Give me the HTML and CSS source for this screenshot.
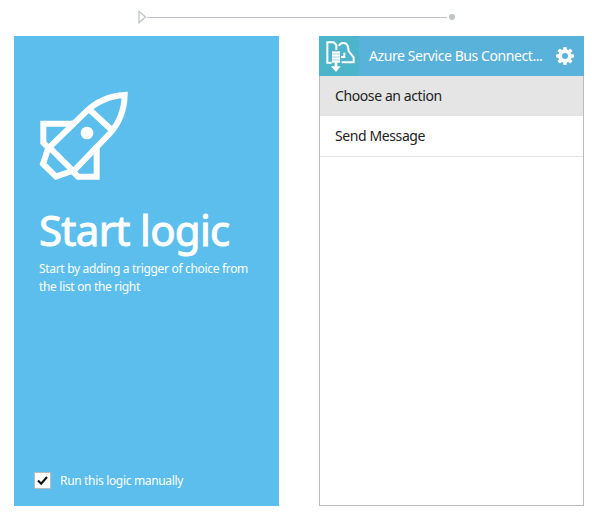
FILE: index.html
```html
<!DOCTYPE html>
<html lang="en">
<head>
<meta charset="utf-8">
<title>Start logic</title>
<link rel="stylesheet" href="styles.css">
</head>
<body>
<div class="flow">
  <svg class="flow-start" viewBox="0 0 9 14"><path d="M1 1.3V12.7L7.5 7Z" fill="none" stroke="#bfc2c9" stroke-width="1.3"/></svg>
  <span class="flow-line"></span>
  <span class="flow-end"></span>
</div>
<main class="cards">
  <section class="card start">
    <svg class="rocket" viewBox="0 0 324 312" fill="none" stroke="#fff" stroke-width="18">
      <path d="M58 190L166 85C200 52 242 35 284 33C283 77 270 114 240 148L130 262Z"/>
      <path d="M180 78L245 138M134 119H40V176L62 198M56 188L39 240L78 278L126 261M200 184V278H144L118 252"/>
      <circle cx="171" cy="147" r="19" fill="#fff" stroke="none"/>
    </svg>
    <h1 class="title">Start logic</h1>
    <p class="intro">Start by adding a trigger of choice from<br>the list on the right</p>
    <label class="manual">
      <span class="check"><svg viewBox="0 0 15 15"><path d="M3 7.5L6.2 10.8L12 4" fill="none" stroke="#111" stroke-width="2.1"/></svg></span>
      <span>Run this logic manually</span>
    </label>
  </section>
  <section class="card connector">
    <header class="head">
      <svg class="bus" viewBox="0 0 120 120" fill="none" stroke="#fff" stroke-width="6">
        <path d="M38 80H25V19H44L52 27V42M60 30C63 19 82 16 87 32L89 45L104 64V79H68M66 63H76V50"/>
        <path d="M39 46H63V80H39Z" fill="#fff" stroke="none"/>
        <path d="M39 54H63M39 63H63M39 72H63" stroke="#70c5d5" stroke-width="2"/>
        <path d="M47 78H55V91H65L51 108L36 91H47Z" fill="#fff" stroke="none"/>
      </svg>
      <span class="name">Azure Service Bus Connect...</span>
      <svg class="gear" viewBox="0 0 18 18"><g fill="#fff"><circle cx="9" cy="9" r="6.7"/><g id="teeth"><rect x="7.2" y="0" width="3.6" height="18" rx=".8"/><rect x="0" y="7.2" width="18" height="3.6" rx=".8"/></g><use href="#teeth" transform="rotate(45 9 9)"/></g><circle cx="9" cy="9" r="3" fill="#59b2d9"/></svg>
    </header>
    <div class="row selected">Choose an action</div>
    <div class="row">Send Message</div>
  </section>
</main>
</body>
</html>
```
FILE: styles.css
```css
* { box-sizing: border-box; }
body {
  margin: 0;
  width: 592px;
  height: 516px;
  overflow: hidden;
  background: #fff;
  font-family: "Noto Sans", "Open Sans", sans-serif;
}
svg { display: block; flex: none; }
.flow {
  display: flex;
  align-items: center;
  height: 36px;
  padding: 0 0 2px 138px;
}
.flow-start { width: 9px; height: 14px; }
.flow-line { width: 300px; height: 1px; background: #bfc2c6; }
.flow-end { width: 6px; height: 6px; margin-left: 2px; border-radius: 50%; background: #bfc4c9; }
.cards { display: flex; gap: 40px; padding-left: 14px; }
.card { width: 265px; height: 470px; }
.start {
  display: flex;
  flex-direction: column;
  padding: 48px 16px 16px;
  background: #5cbeec;
  color: #fff;
}
.rocket { width: 108px; height: 104px; }
.title {
  margin: 12px 0 0 9px;
  font-size: 42px;
  line-height: 60px;
  font-weight: 400;
  letter-spacing: -.7px;
  white-space: nowrap;
  -webkit-text-stroke: 1px #fff;
}
.intro {
  margin: 0 0 0 9px;
  font-size: 12px;
  line-height: 18px;
  letter-spacing: -.32px;
  white-space: nowrap;
}
.manual {
  display: flex;
  align-items: center;
  gap: 9px;
  height: 20px;
  margin: auto 0 0 4px;
  font-size: 12px;
  letter-spacing: -.33px;
}
.check { width: 17px; height: 17px; border: 1px solid #bbb; background: #fff; }
.connector { border: 1px solid #bbb; border-top: 0; }
.head {
  display: flex;
  align-items: center;
  height: 40px;
  margin: 0 -1px;
  background: #59b2d9;
  color: #fff;
  font-size: 14px;
}
.bus { width: 40px; height: 40px; background: #4db5c9; }
.name { width: 187px; padding: 0 0 1px 10px; white-space: nowrap; letter-spacing: -.42px; }
.gear { width: 18px; height: 18px; margin-left: 10px; }
.row {
  height: 41px;
  padding-left: 15px;
  border-bottom: 1px solid #e5e5e5;
  color: #222;
  font-size: 14px;
  line-height: 40px;
  letter-spacing: -.4px;
}
.selected { height: 40px; border-bottom: 0; background: #e5e5e5; }
```
